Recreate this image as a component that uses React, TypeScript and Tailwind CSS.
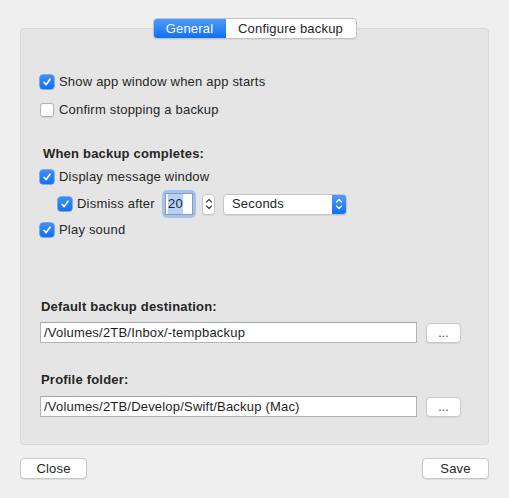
import type { ReactNode } from 'react'

const font = { fontFamily: '"Liberation Sans", Arial, sans-serif' }

function CheckBox({ checked }: { checked: boolean }) {
  if (checked) {
    return (
      <span className="flex h-[14px] w-[14px] shrink-0 items-center justify-center rounded-[3px] bg-gradient-to-b from-[#3d8ff7] to-[#0f6ff3] shadow-[0_0_0_0.5px_#1f6fd8]">
        <svg width="10" height="10" viewBox="0 0 10 10">
          <path d="M2 5.3 L4.1 7.6 L8 2.2" fill="none" stroke="white" strokeWidth="1.6" strokeLinecap="round" strokeLinejoin="round" />
        </svg>
      </span>
    )
  }
  return <span className="h-[14px] w-[14px] shrink-0 rounded-[3px] border border-[#b3b3b3] bg-white shadow-[0_0.5px_1px_rgba(0,0,0,0.08)]" />
}

function CheckRow({ checked, children }: { checked: boolean; children: ReactNode }) {
  return (
    <div className="flex h-[18px] items-center gap-[5px]">
      <CheckBox checked={checked} />
      <span className="text-[13px] text-[#262626]">{children}</span>
    </div>
  )
}

function UpDown({ color }: { color: string }) {
  return (
    <svg width="8" height="14" viewBox="0 0 8 14">
      <path d="M1.5 5 L4 2.5 L6.5 5" fill="none" stroke={color} strokeWidth="1.2" strokeLinecap="round" strokeLinejoin="round" />
      <path d="M1.5 9 L4 11.5 L6.5 9" fill="none" stroke={color} strokeWidth="1.2" strokeLinecap="round" strokeLinejoin="round" />
    </svg>
  )
}

function PathField({ value }: { value: string }) {
  return (
    <div className="flex items-center">
      <div className="flex h-[21px] w-[377px] items-center border border-[#b4b4b4] border-t-[#a6a6a6] bg-white pl-[3px] text-[13px] text-[#1e1e1e]">
        {value}
      </div>
      <button className="ml-[9px] flex h-[20px] w-[35px] items-center justify-center rounded-[4px] border border-[#c9c9c9] bg-white text-[12px] leading-none text-[#444] shadow-[0_1px_1px_rgba(0,0,0,0.08)]">
        ...
      </button>
    </div>
  )
}

export default function App() {
  return (
    <div className="h-[498px] w-[509px] bg-[#efefef] px-5 pt-[18px] tracking-[0.2px]" style={font}>
      {/* Tabs */}
      <div className="relative z-10 flex justify-center">
        <div className="flex h-[21px] overflow-hidden rounded-[4px] border border-[#c3c3c3] bg-white text-[13px] shadow-[0_1px_1px_rgba(0,0,0,0.06)]">
          <div className="flex w-[72px] items-center justify-center bg-gradient-to-b from-[#4d9cf8] to-[#0e6ff5] text-white">General</div>
          <div className="flex w-[130px] items-center justify-center text-[#262626]">Configure backup</div>
        </div>
      </div>

      {/* Panel */}
      <div className="-mt-[11px] h-[417px] rounded-[4px] border border-[#d9d9d9] bg-[#e5e5e5] pl-[19px] pt-[44px]">
        <CheckRow checked>Show app window when app starts</CheckRow>
        <div className="mt-[10px]">
          <CheckRow checked={false}>Confirm stopping a backup</CheckRow>
        </div>

        <div className="ml-[3px] mt-[26px] flex h-[18px] items-center text-[13px] font-bold text-[#262626]">When backup completes:</div>
        <div className="mt-[5px]">
          <CheckRow checked>Display message window</CheckRow>
        </div>
        <div className="ml-[18px] mt-[3px] flex h-[30px] items-center">
          <div className="w-[104px]">
            <CheckRow checked>Dismiss after</CheckRow>
          </div>
          <div className="rounded-[5px] bg-[#9fc3f4] p-[3px]">
            <div className="flex h-[22px] w-[28px] items-center border border-[#9a9a9a] bg-white pl-[2px] text-[13px] text-[#1e1e1e]">
              <span className="bg-[#b2d2fb]">20</span>
            </div>
          </div>
          <div className="ml-[6px] flex h-[21px] w-[13px] items-center justify-center rounded-[4px] border border-[#c5c5c5] bg-white shadow-[0_1px_1px_rgba(0,0,0,0.06)]">
            <UpDown color="#444" />
          </div>
          <div className="ml-[8px] flex h-[21px] w-[124px] items-stretch overflow-hidden rounded-[4px] border border-[#c5c5c5] bg-white shadow-[0_1px_1px_rgba(0,0,0,0.08)]">
            <div className="flex flex-1 items-center pl-[8px] text-[13px] text-[#262626]">Seconds</div>
            <div className="flex w-[14px] items-center justify-center bg-gradient-to-b from-[#4d9cf8] to-[#0e6ff5]">
              <UpDown color="white" />
            </div>
          </div>
        </div>
        <div className="mt-[2px]">
          <CheckRow checked>Play sound</CheckRow>
        </div>

        <div className="ml-[1px] mt-[59px] flex h-[18px] items-center text-[13px] font-bold text-[#262626]">Default backup destination:</div>
        <div className="mt-[6px]">
          <PathField value="/Volumes/2TB/Inbox/-tempbackup" />
        </div>

        <div className="ml-[1px] mt-[28px] flex h-[18px] items-center text-[13px] font-bold text-[#262626]">Profile folder:</div>
        <div className="mt-[7px]">
          <PathField value="/Volumes/2TB/Develop/Swift/Backup (Mac)" />
        </div>
      </div>

      {/* Footer */}
      <div className="mt-[13px] flex justify-between">
        <button className="h-[21px] w-[67px] rounded-[4px] border border-[#c9c9c9] bg-white text-[13px] text-[#262626] shadow-[0_1px_1px_rgba(0,0,0,0.08)]">Close</button>
        <button className="h-[21px] w-[67px] rounded-[4px] border border-[#c9c9c9] bg-white text-[13px] text-[#262626] shadow-[0_1px_1px_rgba(0,0,0,0.08)]">Save</button>
      </div>
    </div>
  )
}
